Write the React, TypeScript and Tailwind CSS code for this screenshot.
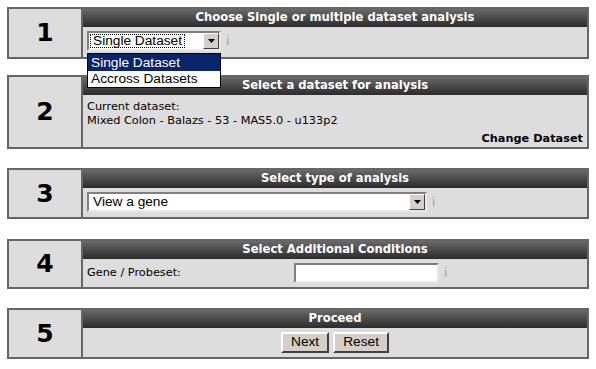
import React from "react";

const V = { fontFamily: '"DejaVu Sans", Verdana, sans-serif' };
const A = { fontFamily: '"Liberation Sans", Arial, sans-serif' };

function Header({ title }: { title: string }) {
  return (
    <div
      className="h-[18px] flex items-center justify-center text-white font-bold text-[11.6px] leading-none bg-gradient-to-b from-[#6a6a6a] to-[#2c2c2c]"
      style={V}
    >
      {title}
    </div>
  );
}

function Panel({
  num,
  title,
  bodyH,
  className,
  children,
}: {
  num: string;
  title: string;
  bodyH: string;
  className?: string;
  children?: React.ReactNode;
}) {
  return (
    <div className={`mx-[7px] w-[582px] border-2 border-[#666] flex bg-[#dddddd] ${className ?? ""}`}>
      <div
        className="w-[74px] shrink-0 border-r-2 border-[#666] flex items-center justify-center text-[25px] font-bold text-black"
        style={V}
      >
        {num}
      </div>
      <div className="flex-1 flex flex-col">
        <Header title={title} />
        <div className={`${bodyH} relative`}>{children}</div>
      </div>
    </div>
  );
}

function Arrow() {
  return (
    <div className="w-[16px] h-[16px] bg-[#d4d0c8] border border-t-white border-l-white border-r-[#404040] border-b-[#404040] flex items-center justify-center">
      <svg width="7" height="4" viewBox="0 0 7 4">
        <path d="M0 0H7L3.5 4Z" fill="#000" />
      </svg>
    </div>
  );
}

function Select({ w, text, focus }: { w: string; text: string; focus?: boolean }) {
  return (
    <div
      className={`${w} h-[20px] bg-white border-2 border-t-[#808080] border-l-[#808080] border-r-[#e8e8e8] border-b-[#e8e8e8] flex items-center`}
    >
      <div className="flex-1 h-full flex items-center pl-[1px] pr-[1px]">
        <div
          className={`h-[14px] flex items-center px-[2px] text-[13.7px] leading-none text-black ${
            focus ? "border border-dotted border-black" : "border border-transparent"
          }`}
          style={A}
        >
          {text}
        </div>
      </div>
      <Arrow />
    </div>
  );
}

function Info() {
  return (
    <span className="text-[12px] text-[#a0a0a0] ml-[5px]" style={V}>
      i
    </span>
  );
}

export default function App() {
  return (
    <div className="w-[596px] h-[369px] bg-white pt-[7px]">
      <Panel num="1" title="Choose Single or multiple dataset analysis" bodyH="h-[30px]" className="relative z-10">
        <div className="flex items-center pl-[4px] pt-[4px]">
          <Select w="w-[134px]" text="Single Dataset" focus />
          <Info />
        </div>
        <div
          className="absolute left-[4px] top-[26px] w-[134px] bg-white border border-black text-[13.7px] leading-none z-20"
          style={A}
        >
          <div className="h-[17px] flex items-center pl-[3px] bg-[#0a246a] text-white">Single Dataset</div>
          <div className="h-[16px] flex items-center pl-[3px] text-black">Accross Datasets</div>
        </div>
      </Panel>

      <Panel num="2" title="Select a dataset for analysis" bodyH="h-[52px]" className="mt-[16px]">
        <div className="flex flex-col pl-[4px] pr-[4px] pt-[5px] text-[11.3px] leading-[14px] text-black" style={V}>
          <div>Current dataset:</div>
          <div>Mixed Colon - Balazs - 53 - MAS5.0 - u133p2</div>
          <div className="self-end font-bold mt-[4px]">Change Dataset</div>
        </div>
      </Panel>

      <Panel num="3" title="Select type of analysis" bodyH="h-[29px]" className="mt-[19px]">
        <div className="flex items-center pl-[4px] pt-[4px]">
          <Select w="w-[340px]" text="View a gene" />
          <Info />
        </div>
      </Panel>

      <Panel num="4" title="Select Additional Conditions" bodyH="h-[28px]" className="mt-[20px]">
        <div className="flex items-center pl-[4px] pt-[4px] text-[11.3px] text-black" style={V}>
          <div className="w-[207px]">Gene / Probeset:</div>
          <div className="w-[145px] h-[20px] bg-white border-2 border-t-[#808080] border-l-[#808080] border-r-[#e8e8e8] border-b-[#e8e8e8]" />
          <Info />
        </div>
      </Panel>

      <Panel num="5" title="Proceed" bodyH="h-[29px]" className="mt-[19px]">
        <div className="flex items-center justify-center gap-[4px] pt-[4px] text-[13.7px] text-black" style={A}>
          <div className="h-[21px] px-[8px] flex items-center bg-[#d4d0c8] border-2 border-t-white border-l-white border-r-[#404040] border-b-[#404040]">
            Next
          </div>
          <div className="h-[21px] px-[8px] flex items-center bg-[#d4d0c8] border-2 border-t-white border-l-white border-r-[#404040] border-b-[#404040]">
            Reset
          </div>
        </div>
      </Panel>
    </div>
  );
}
